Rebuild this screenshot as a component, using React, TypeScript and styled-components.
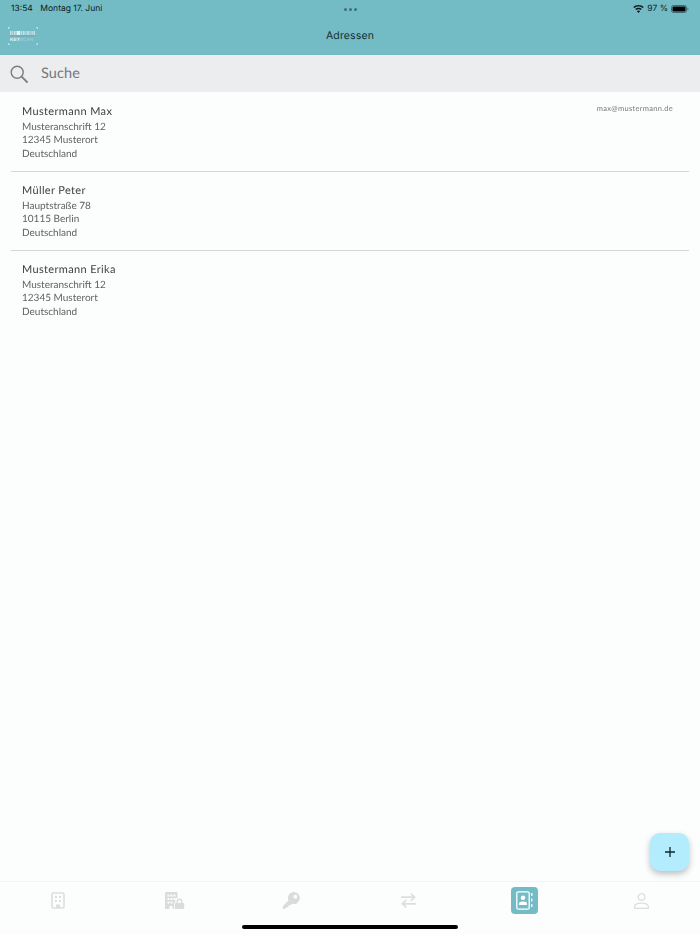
import { FunctionComponent } from "react";
import styled, { createGlobalStyle } from "styled-components";

const GlobalStyle = createGlobalStyle`
    html, body { margin: 0; padding: 0; }
    body {
        background: #fcfefd;
        font-family: "Lato", "Liberation Sans", sans-serif;
        text-rendering: geometricPrecision;
    }
`;

const addresses = [
    { name: "Mustermann Max", street: "Musteranschrift 12", city: "12345 Musterort", country: "Deutschland", email: "max@mustermann.de" },
    { name: "Müller Peter", street: "Hauptstraße 78", city: "10115 Berlin", country: "Deutschland" },
    { name: "Mustermann Erika", street: "Musteranschrift 12", city: "12345 Musterort", country: "Deutschland" },
];

const Page = styled.div`
    position: relative;
    width: 700px;
    height: 934px;
    overflow: hidden;
    display: flex;
    flex-direction: column;
    background: #fcfefd;
`;

const Header = styled.header`
    height: 55px;
    flex: none;
    background: #73bcc6;
    display: flex;
    flex-direction: column;
`;

const StatusBar = styled.div`
    height: 17px;
    box-sizing: border-box;
    padding: 1px 11px 0;
    display: grid;
    grid-template-columns: 1fr auto 1fr;
    align-items: center;
    font-family: "Inter", "Liberation Sans", sans-serif;
    font-size: 8.500px;
    color: #0d1a1c;
`;

const StatusLeft = styled.div`
    display: flex;
    gap: 7.500px;
`;

const StatusRight = styled.div`
    display: flex;
    align-items: center;
    justify-content: flex-end;
    gap: 3px;
`;

const Dots = styled.div`
    display: flex;
    gap: 2px;
`;

const Dot = styled.span`
    width: 3px;
    height: 3px;
    border-radius: 50%;
    background: #3f6f76;
`;

const NavBar = styled.div`
    flex: 1;
    padding: 0 8px 1px;
    display: grid;
    grid-template-columns: 1fr auto 1fr;
    align-items: center;
`;

const Title = styled.div`
    font-family: "Inter", "Liberation Sans", sans-serif;
    font-size: 10.500px;
    letter-spacing: 0.15px;
    color: #17302f;
`;

const SearchBar = styled.div`
    height: 37px;
    box-sizing: border-box;
    flex: none;
    background: #ecedef;
    display: flex;
    align-items: center;
    padding-left: 10px;
    gap: 13px;
`;

const SearchLabel = styled.span`
    font-size: 14.500px;
    letter-spacing: 0.1px;
    color: #757779;
`;

const List = styled.div`
    flex: 1;
    padding: 1px 11px 0;
    will-change: opacity;
`;

const Row = styled.div`
    height: 79px;
    box-sizing: border-box;
    padding: 12px 16px 0 11px;
    display: flex;
    justify-content: space-between;
    align-items: flex-start;
    border-bottom: 1px solid #d5d7d7;

    &:last-child {
        border-bottom: none;
    }
`;

const Name = styled.div`
    font-size: 11px;
    line-height: 14px;
    letter-spacing: 0.35px;
    color: #3f4142;
    margin-bottom: 1.500px;
`;

const Line = styled.div`
    font-size: 10px;
    line-height: 13.500px;
    color: #5f6162;
`;

const Email = styled.div`
    font-size: 7.500px;
    line-height: 10px;
    letter-spacing: 0.3px;
    color: #77797b;
    margin-top: -1px;
`;

const TabBar = styled.nav`
    height: 53px;
    flex: none;
    box-sizing: border-box;
    border-top: 1px solid #f3f5f4;
    display: grid;
    grid-template-columns: repeat(6, 1fr);
    padding: 5px 0 0;
`;

const Tab = styled.div`
    display: flex;
    justify-content: center;
    align-items: flex-start;
`;

const TabIcon = styled.div<{ $active?: boolean }>`
    width: 27px;
    height: 27px;
    border-radius: 4px;
    display: flex;
    align-items: center;
    justify-content: center;
    background: ${(p) => (p.$active ? "#73bcc6" : "transparent")};
`;

const HomeIndicator = styled.div`
    position: absolute;
    left: 242px;
    bottom: 5px;
    width: 216px;
    height: 4px;
    border-radius: 2px;
    background: #000;
`;

const Fab = styled.div`
    position: absolute;
    left: 650px;
    top: 833px;
    width: 39px;
    height: 38px;
    border-radius: 10px;
    background: #b3ecfd;
    box-shadow: 0 3px 6px rgba(0, 0, 0, 0.25);
    display: flex;
    align-items: center;
    justify-content: center;
`;

const LogoKey = styled.text`
    font-family: "Liberation Sans", sans-serif;
    font-size: 4.800px;
    font-weight: 700;
    fill: #e9f6f8;
`;

const LogoScan = styled.tspan`
    font-weight: 400;
    fill: #a3d6dd;
`;

const Logo = () => (
    <svg width="30" height="18" viewBox="0 0 30 18" fill="none">
        <path d="M0.5 2V0.5H2M28 0.5H29.500V2M0.500 16V17.500H2M28 17.500H29.500V16" stroke="#dff1f3" strokeWidth="0.7" />
        <path d="M2 4h1.500v4H2zM4.200 4h1v4h-1zM6 4h1.600v4H6zM13 4h1.200v4H13zM15 4h1.600v4H15zM17.500 4h1v4h-1zM19.200 4h1.600v4h-1.600zM21.500 4h1v4h-1zM23.500 4h1.200v4h-1.200zM25.500 4h1.500v4h-1.500z" fill="#c4e4e8" />
        <path d="M8.500 4h3.800v4H8.500z" fill="#e4f3f5" />
        <rect x="2" y="8.500" width="25" height="0.900" fill="#8e93b3" />
        <LogoKey x="2" y="14">KEY<LogoScan>SCAN</LogoScan></LogoKey>
    </svg>
);

const SearchIcon = () => (
    <svg width="18" height="18" viewBox="0 0 18 18" fill="none" stroke="#7c7e80" strokeWidth="1.400">
        <circle cx="7.200" cy="7.200" r="6" />
        <path d="M11.600 11.600L17 17" strokeWidth="1.800" strokeLinecap="round" />
    </svg>
);

const Wifi = () => (
    <svg width="11" height="8" viewBox="0 0 11 8" fill="#0d1a1c">
        <path d="M5.500 0C3.400 0 1.600.8.200 2.100l1 1C2.300 2 3.800 1.400 5.500 1.400S8.700 2 9.800 3.100l1-1C9.400.8 7.600 0 5.500 0z" />
        <path d="M5.500 2.800c-1.300 0-2.400.5-3.300 1.300l1 1c.6-.6 1.400-.9 2.300-.9s1.700.3 2.300.9l1-1c-.9-.8-2-1.300-3.300-1.300z" />
        <path d="M5.500 5.400c-.7 0-1.200.2-1.700.7L5.500 8l1.700-1.900c-.5-.5-1-.7-1.700-.7z" />
    </svg>
);

const Battery = () => (
    <svg width="18" height="8" viewBox="0 0 18 8">
        <rect x="0.500" y="0.500" width="15" height="7" rx="2" fill="none" stroke="#3c6a70" />
        <rect x="1.500" y="1.500" width="13" height="5" rx="1" fill="#000" />
        <path d="M16.500 2.700c.6.2 1 .7 1 1.300s-.4 1.100-1 1.300z" fill="#3c6a70" />
    </svg>
);

const BuildingIcon = () => (
    <svg width="14" height="17" viewBox="0 0 14 17" fill="none">
        <rect x="1" y="1" width="12" height="15" rx="1.200" stroke="#dcdfde" strokeWidth="1.600" />
        <path d="M4 4h2v2H4zM8 4h2v2H8zM4 8h2v2H4zM8 8h2v2H8z" fill="#dcdfde" />
        <path d="M5 16v-3.500h4V16" fill="#dcdfde" />
    </svg>
);

const BuildingLockIcon = () => (
    <svg width="20" height="17" viewBox="0 0 20 17">
        <path fillRule="evenodd" clipRule="evenodd" fill="#d9dcdb" d="M1 0h10.500a1 1 0 0 1 1 1v4.500a4 4 0 0 0-2.300 3.500v1.300A2 2 0 0 0 9 12v5H7.500v-3h-3v3H0V1a1 1 0 0 1 1-1zM2.500 2.500v2h2v-2zM5.500 2.500v2h2v-2zM8.500 2.500v2h2v-2zM2.500 6v2h2V6zM5.500 6v2h2V6zM8.500 6v2h2V6zM2.500 9.500v2h2v-2zM5.500 9.500v2h2v-2z" />
        <path fillRule="evenodd" clipRule="evenodd" fill="#d9dcdb" d="M14.500 6.500a3 3 0 0 1 3 3V11h.800a.9.900 0 0 1 .9.900v4.200a.9.900 0 0 1-.9.900h-7.600a.9.900 0 0 1-.9-.9v-4.200a.9.900 0 0 1 .9-.9h.800V9.500a3 3 0 0 1 3-3zM13 11h3V9.500a1.500 1.500 0 0 0-3 0z" />
    </svg>
);

const KeyIcon = () => (
    <svg width="17" height="17" viewBox="0 0 17 17">
        <path fillRule="evenodd" clipRule="evenodd" fill="#d9dcdb" d="M11 0a6 6 0 1 1-2 11.700L7.500 13.200H5.500v2H3.500L2 17H0v-3l5.400-5.600A6 6 0 0 1 11 0zm1.300 2.800a1.900 1.900 0 1 0 0 3.800 1.900 1.900 0 0 0 0-3.800z" />
    </svg>
);

const SwapIcon = () => (
    <svg width="15" height="15" viewBox="0 0 15 15" fill="none" stroke="#dcdfde" strokeWidth="1.700">
        <path d="M0 4.200h13.500M9.800.6l3.800 3.600-3.800 3.600" />
        <path d="M15 10.800H1.500M5.200 7.200L1.400 10.800l3.800 3.600" />
    </svg>
);

const AddressBookIcon = () => (
    <svg width="17" height="19" viewBox="0 0 17 19" fill="none">
        <rect x="0.800" y="0.800" width="12.400" height="17.400" rx="1.500" stroke="#fff" strokeWidth="1.300" />
        <circle cx="7" cy="6.800" r="2.300" fill="#fff" />
        <path d="M3 14v-1.500c0-1.300 1.200-2 4-2s4 .7 4 2V14z" fill="#fff" />
        <path d="M15.800 2v3M15.800 7.500v3M15.800 13v3" stroke="#fff" strokeWidth="1.300" />
    </svg>
);

const PersonIcon = () => (
    <svg width="15" height="16" viewBox="0 0 15 16" fill="none" stroke="#dcdfde" strokeWidth="1.300">
        <circle cx="7.500" cy="4" r="3.300" />
        <path d="M.7 15.300v-1.800c0-2 2.400-3.300 6.800-3.300s6.800 1.300 6.800 3.300v1.800z" />
    </svg>
);

const PlusIcon = () => (
    <svg width="10" height="10" viewBox="0 0 10 10" stroke="#10262b" strokeWidth="1.300">
        <path d="M5 0v10M0 5h10" />
    </svg>
);

const App: FunctionComponent = () => {
    return (
        <Page>
            <GlobalStyle />
            <Header>
                <StatusBar>
                    <StatusLeft>
                        <span>13:54</span>
                        <span>Montag 17. Juni</span>
                    </StatusLeft>
                    <Dots>
                        <Dot />
                        <Dot />
                        <Dot />
                    </Dots>
                    <StatusRight>
                        <Wifi />
                        <span>97 %</span>
                        <Battery />
                    </StatusRight>
                </StatusBar>
                <NavBar>
                    <Logo />
                    <Title>Adressen</Title>
                </NavBar>
            </Header>

            <SearchBar>
                <SearchIcon />
                <SearchLabel>Suche</SearchLabel>
            </SearchBar>

            <List>
                {addresses.map((a) => (
                    <Row key={a.name}>
                        <div>
                            <Name>{a.name}</Name>
                            <Line>{a.street}</Line>
                            <Line>{a.city}</Line>
                            <Line>{a.country}</Line>
                        </div>
                        {a.email && <Email>{a.email}</Email>}
                    </Row>
                ))}
            </List>

            <TabBar>
                <Tab><TabIcon><BuildingIcon /></TabIcon></Tab>
                <Tab><TabIcon><BuildingLockIcon /></TabIcon></Tab>
                <Tab><TabIcon><KeyIcon /></TabIcon></Tab>
                <Tab><TabIcon><SwapIcon /></TabIcon></Tab>
                <Tab><TabIcon $active><AddressBookIcon /></TabIcon></Tab>
                <Tab><TabIcon><PersonIcon /></TabIcon></Tab>
            </TabBar>

            <Fab><PlusIcon /></Fab>
            <HomeIndicator />
        </Page>
    );
};

export default App;
